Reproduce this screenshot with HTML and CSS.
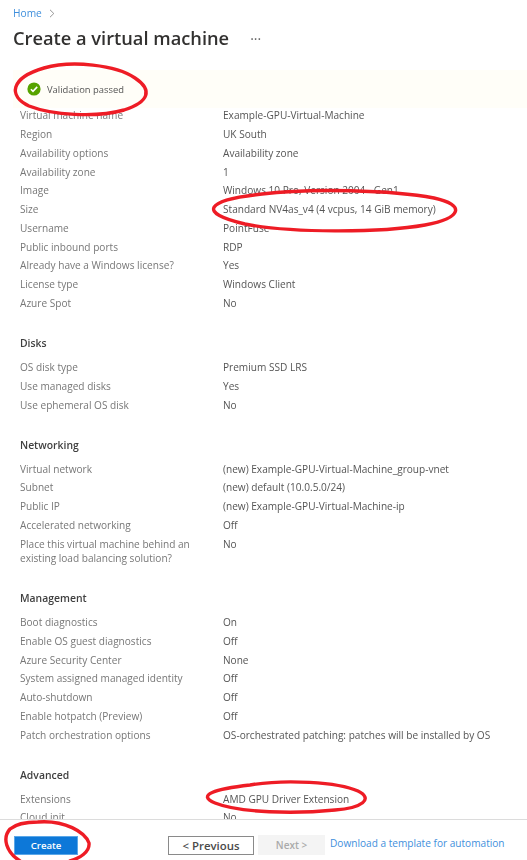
FILE: index.html
```html
<!DOCTYPE html>
<html lang="en">

<head>
  <meta charset="UTF-8" />
  <meta name="viewport" content="width=device-width, initial-scale=1.0" />
  <title>Create a virtual machine</title>
  <link rel="stylesheet" href="styles.css">
</head>

<body>
  <div class="page">

    <!-- Header -->
    <div class="header">
      <nav class="breadcrumb">
        <a href="#">Home</a>
        <svg class="chevron" width="6" height="9" viewBox="0 0 6 9"><path d="M1 .8 4.8 4.5 1 8.2" fill="none" stroke="#8a8a8a" stroke-width=".9"/></svg>
      </nav>
      <div class="title-row">
        <h1>Create a virtual machine</h1>
        <span class="more">&middot;&middot;&middot;</span>
      </div>
    </div>

    <!-- Validation banner -->
    <div class="banner">
      <svg width="14" height="14" viewBox="0 0 14 14"><circle cx="7" cy="7" r="6.6" fill="#57a300"/><path d="M3.9 7.2 6 9.3 10.2 4.9" fill="none" stroke="#fff" stroke-width="1.6"/></svg>
      <span>Validation passed</span>
    </div>

    <!-- Summary -->
    <div class="summary">
      <section class="group first">
        <div class="row"><span>Virtual machine name</span><span>Example-GPU-Virtual-Machine</span></div>
        <div class="row"><span>Region</span><span>UK South</span></div>
        <div class="row"><span>Availability options</span><span>Availability zone</span></div>
        <div class="row"><span>Availability zone</span><span>1</span></div>
        <div class="row"><span>Image</span><span>Windows 10 Pro, Version 2004 - Gen1</span></div>
        <div class="row"><span>Size</span><span>Standard NV4as_v4 (4 vcpus, 14 GiB memory)</span></div>
        <div class="row"><span>Username</span><span>PointFuse</span></div>
        <div class="row"><span>Public inbound ports</span><span>RDP</span></div>
        <div class="row"><span>Already have a Windows license?</span><span>Yes</span></div>
        <div class="row"><span>License type</span><span>Windows Client</span></div>
        <div class="row"><span>Azure Spot</span><span>No</span></div>
      </section>

      <section class="group">
        <h2>Disks</h2>
        <div class="row"><span>OS disk type</span><span>Premium SSD LRS</span></div>
        <div class="row"><span>Use managed disks</span><span>Yes</span></div>
        <div class="row"><span>Use ephemeral OS disk</span><span>No</span></div>
      </section>

      <section class="group">
        <h2>Networking</h2>
        <div class="row"><span>Virtual network</span><span>(new) Example-GPU-Virtual-Machine_group-vnet</span></div>
        <div class="row"><span>Subnet</span><span>(new) default (10.0.5.0/24)</span></div>
        <div class="row"><span>Public IP</span><span>(new) Example-GPU-Virtual-Machine-ip</span></div>
        <div class="row"><span>Accelerated networking</span><span>Off</span></div>
        <div class="row"><span>Place this virtual machine behind an existing load balancing solution?</span><span>No</span></div>
      </section>

      <section class="group">
        <h2>Management</h2>
        <div class="row"><span>Boot diagnostics</span><span>On</span></div>
        <div class="row"><span>Enable OS guest diagnostics</span><span>Off</span></div>
        <div class="row"><span>Azure Security Center</span><span>None</span></div>
        <div class="row"><span>System assigned managed identity</span><span>Off</span></div>
        <div class="row"><span>Auto-shutdown</span><span>Off</span></div>
        <div class="row"><span>Enable hotpatch (Preview)</span><span>Off</span></div>
        <div class="row"><span>Patch orchestration options</span><span>OS-orchestrated patching: patches will be installed by OS</span></div>
      </section>

      <section class="group">
        <h2>Advanced</h2>
        <div class="row"><span>Extensions</span><span>AMD GPU Driver Extension</span></div>
        <div class="row"><span>Cloud init</span><span>No</span></div>
      </section>
    </div>

    <!-- Footer buttons -->
    <div class="footer">
      <button class="btn-create">Create</button>
      <button class="btn-prev">&lt; Previous</button>
      <button class="btn-next">Next &gt;</button>
      <a class="template-link" href="#">Download a template for automation</a>
    </div>

    <!-- Red marker circles drawn on top of the screenshot -->
    <svg class="markup" width="527" height="860" viewBox="0 0 527 860" fill="none" stroke="#ee1c25" stroke-width="3.4" stroke-linecap="round">
      <path d="M44 68C72 60 116 65 135 78 153 90 149 102 124 110 96 118 52 115 29 106 8 96 10 78 44 68Z"/>
      <path d="M262 194C310 188 392 190 434 198 466 205 462 218 425 225 380 233 290 233 245 224 197 213 205 200 262 194Z"/>
      <path d="M250 785C285 779 338 782 358 791 374 799 362 808 335 810 295 814 240 813 215 803 196 795 215 789 250 785Z"/>
      <path d="M38 822C65 820 85 832 89 843 90 852 80 858 70 861M20 861C6 852 2 838 10 829 17 823 28 822 38 822"/>
    </svg>
  </div>
</body>

</html>
```

FILE: styles.css
```css
* {
  margin: 0;
  padding: 0;
  box-sizing: border-box;
}

body {
  font-family: 'Open Sans', sans-serif;
  background: #fff;
  color: #4a4a4a;
  font-size: 10.1px;
}

.page {
  position: relative;
  width: 527px;
  height: 860px;
  display: flex;
  flex-direction: column;
  overflow: hidden;
  filter: blur(0.5px);
}

.header {
  padding: 6px 13px 0;
  height: 70px;
}

.breadcrumb {
  display: flex;
  align-items: center;
  gap: 7px;
  height: 14px;
}

.breadcrumb a {
  color: #3f8fdc;
  font-size: 10.2px;
  text-decoration: none;
}

.title-row {
  display: flex;
  align-items: center;
  gap: 21px;
  margin-top: 5px;
}

h1 {
  font-size: 18.25px;
  font-weight: 600;
  color: #323130;
  line-height: 26px;
}

.more {
  font-size: 14px;
  color: #666;
}

.banner {
  height: 38px;
  margin-left: 13px;
  padding-left: 14px;
  background: #fffef8;
  display: flex;
  align-items: center;
  gap: 6px;
  color: #555;
  font-size: 9.4px;
}

.summary {
  flex: 1;
  overflow: hidden;
  padding: 0 20px;
  min-height: 0;
}

.group {
  margin-top: 21.6px;
}

.group.first {
  margin-top: -2px;
}

h2 {
  font-size: 10.4px;
  font-weight: 600;
  color: #3f3f3f;
  line-height: 18px;
  margin-bottom: 5.6px;
}

.row {
  display: grid;
  grid-template-columns: 203px 1fr;
  line-height: 14.4px;
  padding: 2.2px 0;
}

.row span:first-child {
  color: #777;
  padding-right: 28px;
}

.row span:last-child {
  color: #555;
}

.footer {
  height: 41px;
  border-top: 1px solid #dcdcdc;
  background: #fff;
  display: flex;
  align-items: flex-start;
  padding: 16px 0 0 15px;
}

button {
  font-family: inherit;
  font-size: 9.6px;
  font-weight: 600;
  height: 18px;
  border: 1px solid transparent;
}

.btn-create {
  width: 62px;
  height: 17px;
  margin-top: 1px;
  background: #0d78d8;
  color: #fff;
  outline: 1px solid #5aa7e8;
}

.btn-prev {
  width: 86px;
  height: 19px;
  margin-left: 91px;
  background: #fff;
  border-color: #8a8a8a;
  color: #4a4a4a;
  font-size: 11.4px;
  line-height: 15px;
}

.btn-next {
  width: 67px;
  height: 20px;
  margin-top: -1px;
  margin-left: 4px;
  background: #f4f4f4;
  color: #aaa;
  font-size: 10px;
}

.template-link {
  margin-left: 5px;
  color: #3f8fdc;
  font-size: 10.1px;
  text-decoration: none;
  line-height: 14px;
}

.markup {
  position: absolute;
  top: 0;
  left: 0;
}
```
